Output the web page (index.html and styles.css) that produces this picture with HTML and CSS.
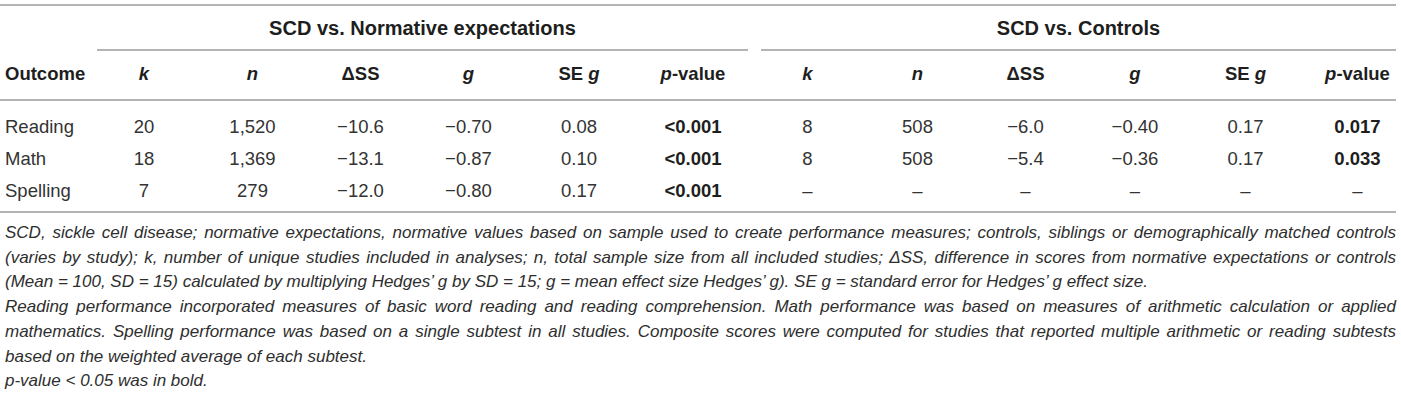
FILE: index.html
```html
<!DOCTYPE html>
<html lang="en">
  <head>
    <meta charset="UTF-8" />
    <meta name="viewport" content="width=device-width, initial-scale=1.0" />
    <title>SCD academic outcomes</title>
    <link rel="stylesheet" href="styles.css">
  </head>
  <body>
    <div class="main">
      <table class="results">
        <colgroup>
          <col style="width: 90px" />
          <col style="width: 108px" />
          <col style="width: 109px" />
          <col style="width: 107px" />
          <col style="width: 109px" />
          <col style="width: 112px" />
          <col style="width: 116px" />
          <col style="width: 113px" />
          <col style="width: 107px" />
          <col style="width: 109px" />
          <col style="width: 110px" />
          <col style="width: 111px" />
          <col style="width: 95px" />
        </colgroup>
        <thead>
          <tr class="group-row">
            <th></th>
            <th colspan="6"><div class="group-label first">SCD vs. Normative expectations</div></th>
            <th colspan="6"><div class="group-label second">SCD vs. Controls</div></th>
          </tr>
          <tr class="col-row">
            <th class="outcome">Outcome</th>
            <th><i>k</i></th>
            <th><i>n</i></th>
            <th>&Delta;SS</th>
            <th><i>g</i></th>
            <th>SE <i>g</i></th>
            <th><i>p</i>-value</th>
            <th><i>k</i></th>
            <th><i>n</i></th>
            <th>&Delta;SS</th>
            <th><i>g</i></th>
            <th>SE <i>g</i></th>
            <th class="last"><i>p</i>-value</th>
          </tr>
        </thead>
        <tbody>
          <tr>
            <td class="outcome">Reading</td>
            <td>20</td>
            <td>1,520</td>
            <td>&minus;10.6</td>
            <td>&minus;0.70</td>
            <td>0.08</td>
            <td><b>&lt;0.001</b></td>
            <td>8</td>
            <td>508</td>
            <td>&minus;6.0</td>
            <td>&minus;0.40</td>
            <td>0.17</td>
            <td class="last"><b>0.017</b></td>
          </tr>
          <tr>
            <td class="outcome">Math</td>
            <td>18</td>
            <td>1,369</td>
            <td>&minus;13.1</td>
            <td>&minus;0.87</td>
            <td>0.10</td>
            <td><b>&lt;0.001</b></td>
            <td>8</td>
            <td>508</td>
            <td>&minus;5.4</td>
            <td>&minus;0.36</td>
            <td>0.17</td>
            <td class="last"><b>0.033</b></td>
          </tr>
          <tr>
            <td class="outcome">Spelling</td>
            <td>7</td>
            <td>279</td>
            <td>&minus;12.0</td>
            <td>&minus;0.80</td>
            <td>0.17</td>
            <td><b>&lt;0.001</b></td>
            <td>&ndash;</td>
            <td>&ndash;</td>
            <td>&ndash;</td>
            <td>&ndash;</td>
            <td>&ndash;</td>
            <td class="last">&ndash;</td>
          </tr>
        </tbody>
      </table>

      <div class="notes">
        <div class="line full">SCD, sickle cell disease; normative expectations, normative values based on sample used to create performance measures; controls, siblings or demographically matched controls</div>
        <div class="line full">(varies by study); k, number of unique studies included in analyses; n, total sample size from all included studies; &Delta;SS, difference in scores from normative expectations or controls</div>
        <div class="line">(Mean = 100, SD = 15) calculated by multiplying Hedges&rsquo; g by SD = 15; g = mean effect size Hedges&rsquo; g). SE g = standard error for Hedges&rsquo; g effect size.</div>
        <div class="line full">Reading performance incorporated measures of basic word reading and reading comprehension. Math performance was based on measures of arithmetic calculation or applied</div>
        <div class="line full">mathematics. Spelling performance was based on a single subtest in all studies. Composite scores were computed for studies that reported multiple arithmetic or reading subtests</div>
        <div class="line">based on the weighted average of each subtest.</div>
        <div class="line">p-value &lt; 0.05 was in bold.</div>
      </div>
    </div>
  </body>
</html>
```

FILE: styles.css
```css
body {
  margin: 0;
  padding: 0;
  background-color: #ffffff;
  color: #333333;
  font-family: "Liberation Sans", Arial, sans-serif;
}
.main {
  width: 1396px;
  padding-top: 4px;
}
.results {
  width: 1396px;
  table-layout: fixed;
  border-collapse: collapse;
  border-top: 2px solid #b4b4b4;
  border-bottom: 2px solid #b4b4b4;
  font-size: 18.5px;
}
.results th,
.results td {
  padding: 0;
  text-align: center;
  line-height: 22px;
}
.results th {
  font-weight: 700;
  color: #1e1e1e;
}
.group-row th {
  padding: 0;
}
.group-label {
  padding: 11px 0 10px;
  border-bottom: 2px solid #b4b4b4;
  font-size: 20px;
}
.group-label.first {
  margin: 0 3px 0 7px;
}
.group-label.second {
  margin: 0 0 0 10px;
}
.col-row th {
  padding: 12px 0 14px;
  border-bottom: 2px solid #b4b4b4;
}
.results td {
  padding: 5px 0;
}
.results tbody tr:first-child td {
  padding-top: 15px;
}
.results tbody tr:last-child td {
  padding-bottom: 9px;
}
.results .outcome {
  text-align: left;
  padding-left: 5px;
}
.results .last {
  padding-left: 18px;
}
.results b {
  color: #1e1e1e;
}
.notes {
  margin-top: 8px;
  padding-left: 5px;
  font-size: 17px;
  font-style: italic;
  line-height: 24.7px;
  color: #2e2e2e;
}
.notes .line {
  white-space: nowrap;
}
.notes .full {
  text-align: justify;
  text-align-last: justify;
}
```
